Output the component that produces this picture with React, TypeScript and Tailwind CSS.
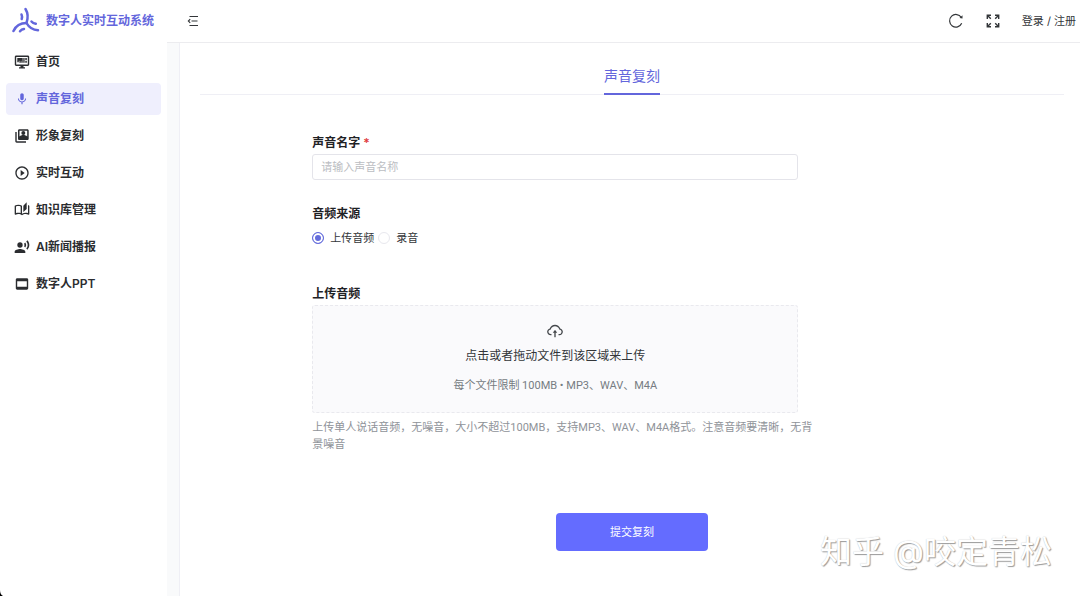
import { useState } from "react";
import type { ReactNode } from "react";
import { AiOutlineCloudUpload } from "react-icons/ai";
import {
  MdMic,
  MdOutlineAutoStories,
  MdPlayCircleOutline,
  MdRecordVoiceOver,
} from "react-icons/md";

function LogoIcon() {
  return (
    <svg
      viewBox="0 0 28 28"
      className="size-7 shrink-0"
      fill="none"
      stroke="currentColor"
      strokeWidth="2.5"
      strokeLinecap="round"
      aria-hidden="true"
    >
      <path d="M13.500 2C16 6 16.500 10 14.500 16" />
      <path d="M14.500 16C9 16 4 18.500 1.500 24" />
      <path d="M14.500 16C17 20.500 21 23 26 23.200" />
      <path d="M9.500 7.500C10.200 9 10.200 10.500 9.700 12" />
      <path d="M19.500 14.500C20.500 15.700 22 16.400 23.800 16.800" />
      <path d="M8 24.200C9 23 10.300 22.200 12 22" />
    </svg>
  );
}

function DashboardIcon() {
  return (
    <svg viewBox="0 0 16 16" className="size-4" fill="currentColor" aria-hidden="true">
      <path
        fillRule="evenodd"
        d="M2.200 1.500h11.600c.8 0 1.400.6 1.400 1.400v7.700c0 .8-.6 1.400-1.400 1.400H9.500v1.200H11v1.300H5v-1.300h1.500V12H2.200c-.8 0-1.400-.6-1.400-1.400V2.900c0-.8.6-1.400 1.400-1.400Zm0 1.400v7.700h11.600V2.900Z"
      />
      <path d="M3.300 4h5.400v4.700H7.300V6.700h-.5v2H5.400v-2H4.800v1.500H3.300ZM9.300 4h1.300v4.700H9.300ZM11.300 4h1.500v2h-1.500ZM11.300 6.800h1.500v1.900h-1.500Z" />
    </svg>
  );
}

function PortraitIcon() {
  return (
    <svg viewBox="0 0 16 16" className="size-4" fill="currentColor" aria-hidden="true">
      <path d="M2.700 4H1.300v9.300c0 .8.6 1.400 1.400 1.400H12v-1.400H2.700Z" />
      <path
        fillRule="evenodd"
        d="M5.300 1.300h8c.8 0 1.400.6 1.400 1.400v8c0 .7-.6 1.300-1.400 1.300h-8c-.7 0-1.300-.6-1.300-1.300v-8c0-.8.6-1.400 1.300-1.400Zm.2 1.400v5.800c1-1 2.200-1.500 3.800-1.500s2.900.5 3.900 1.500V2.700Z"
      />
      <circle cx="9.300" cy="5" r="2" />
    </svg>
  );
}

function SlideIcon() {
  return (
    <svg viewBox="0 0 16 16" className="size-4" fill="currentColor" aria-hidden="true">
      <path
        fillRule="evenodd"
        d="M3.200 2.300h9.600c.8 0 1.400.6 1.400 1.400v8.600c0 .8-.6 1.400-1.400 1.400H3.200c-.8 0-1.400-.6-1.400-1.400V3.700c0-.8.6-1.400 1.400-1.400Zm0 2.900v5.600h9.600V5.200Z"
      />
    </svg>
  );
}

function FoldIcon() {
  return (
    <svg viewBox="0 0 12 12" className="size-3" stroke="currentColor" strokeWidth="1.200" fill="none" aria-hidden="true">
      <path d="M2.500 1.500h8.500M4.500 6h6M2.500 10.500h8.500M3.200 4.200 1.400 6l1.800 1.800" />
    </svg>
  );
}

function ReloadIcon() {
  return (
    <svg viewBox="0 0 16 16" className="size-4" fill="none" stroke="currentColor" strokeWidth="1.200" aria-hidden="true">
      <path d="M13.700 10.300A6.300 6.300 0 1 1 13.300 4.500" />
      <path d="M14.500 2.300v3.200l-3-.5Z" fill="currentColor" stroke="none" />
    </svg>
  );
}

function FullscreenIcon() {
  return (
    <svg viewBox="0 0 14 14" className="size-3.5" fill="none" stroke="currentColor" strokeWidth="1.400" aria-hidden="true">
      <path d="M1.300 5V1.300H5M9 1.300h3.700V5M12.700 9v3.700H9M5 12.700H1.300V9" />
      <path d="M1.500 1.500l3.300 3.300M12.500 1.500 9.200 4.800M12.500 12.500 9.200 9.200M1.500 12.500l3.300-3.300" />
    </svg>
  );
}

const menuItems: { label: string; icon: ReactNode }[] = [
  { label: "首页", icon: <DashboardIcon /> },
  { label: "声音复刻", icon: <MdMic className="size-3.5" /> },
  { label: "形象复刻", icon: <PortraitIcon /> },
  { label: "实时互动", icon: <MdPlayCircleOutline className="size-4" /> },
  { label: "知识库管理", icon: <MdOutlineAutoStories className="size-4" /> },
  { label: "AI新闻播报", icon: <MdRecordVoiceOver className="size-4" /> },
  { label: "数字人PPT", icon: <SlideIcon /> },
];

const sources = [
  { value: "upload", label: "上传音频" },
  { value: "record", label: "录音" },
];

function Sidebar() {
  const [active, setActive] = useState("声音复刻");

  return (
    <aside className="w-[167px] shrink-0 bg-white">
      <div className="flex h-[42px] items-center gap-1.5 pl-3 text-[#6366dc]">
        <LogoIcon />
        <span className="text-xs font-semibold whitespace-nowrap">数字人实时互动系统</span>
      </div>
      <nav className="flex flex-col gap-[5px] px-1.5 pt-1">
        {menuItems.map((item) => (
          <a
            key={item.label}
            href="#"
            onClick={() => setActive(item.label)}
            className={`flex h-8 items-center gap-1.5 rounded px-2 text-xs font-semibold ${
              active === item.label ? "bg-[#efeffd] text-[#6366dc]" : "text-[#2b2d30]"
            }`}
          >
            <span className="flex w-4 justify-center">{item.icon}</span>
            {item.label}
          </a>
        ))}
      </nav>
    </aside>
  );
}

function Header() {
  return (
    <header className="flex h-[43px] items-center justify-between border-b border-[#ececef] bg-white pr-1 pl-5 text-[#333639]">
      <button type="button" aria-label="折叠菜单">
        <FoldIcon />
      </button>
      <div className="flex items-center gap-[22px]">
        <button type="button" aria-label="刷新">
          <ReloadIcon />
        </button>
        <button type="button" aria-label="全屏">
          <FullscreenIcon />
        </button>
        <a href="#" className="text-[11px]">
          登录 / 注册
        </a>
      </div>
    </header>
  );
}

function CloneForm() {
  const [source, setSource] = useState("upload");

  return (
    <form onSubmit={(e) => e.preventDefault()} className="pt-10">
      <div className="ml-[13%] w-9/16">
        <label htmlFor="voice-name" className="block text-xs leading-4 font-semibold text-[#1f2225]">
          声音名字 <span className="text-[#e03c3c]">*</span>
        </label>
        <input
          id="voice-name"
          type="text"
          placeholder="请输入声音名称"
          className="mt-[3px] block h-[26px] w-full rounded-[3px] border border-[#e4e4ea] px-2 text-[11px] outline-none placeholder:text-[#bbbdc2] focus:border-[#646cff]"
        />

        <fieldset className="mt-[26px]">
          <legend className="text-xs leading-4 font-semibold text-[#1f2225]">音频来源</legend>
          <div className="mt-2 flex gap-1">
            {sources.map((item) => (
              <label key={item.value} className="flex items-center gap-1.5 text-[11px] leading-4 text-[#333639]">
                <input
                  type="radio"
                  name="source"
                  value={item.value}
                  checked={source === item.value}
                  onChange={() => setSource(item.value)}
                  className="size-3 appearance-none rounded-full border border-[#e8e8ee] bg-white checked:border-[#646cdc] checked:bg-[#646cdc] checked:shadow-[inset_0_0_0_2px_#fff]"
                />
                {item.label}
              </label>
            ))}
          </div>
        </fieldset>

        <div className="mt-10 text-xs leading-4 font-semibold text-[#1f2225]">上传音频</div>
        <label
          htmlFor="audio-file"
          className="mt-[3px] flex h-27 cursor-pointer flex-col items-center rounded-[3px] border border-dashed border-[#e9e9ee] bg-[#fafafc] pt-4"
        >
          <AiOutlineCloudUpload className="size-[18px] text-[#45484c]" />
          <span className="mt-2 text-xs leading-4 text-[#333639]">点击或者拖动文件到该区域来上传</span>
          <span className="mt-3.5 font-[Roboto,'Noto_Sans_CJK_SC',sans-serif] text-[11px] leading-4 text-[#767c82]">
            每个文件限制 100MB • MP3、WAV、M4A
          </span>
          <input id="audio-file" type="file" accept=".mp3,.wav,.m4a" className="sr-only" />
        </label>
        <p className="-mr-4 mt-1.5 font-[Roboto,'Noto_Sans_CJK_SC',sans-serif] text-[11px] leading-[17px] text-[#8f9399]">
          上传单人说话音频，无噪音，大小不超过100MB，支持MP3、WAV、M4A格式。注意音频要清晰，无背景噪音
        </p>
      </div>

      <div className="mt-15 flex justify-center">
        <button
          type="submit"
          className="h-[38px] w-38 rounded bg-[#646cff] text-[11px] text-white hover:bg-[#747bff]"
        >
          提交复刻
        </button>
      </div>
    </form>
  );
}

export default function App() {
  return (
    <div className="relative flex min-h-screen overflow-hidden bg-white font-[Inter,'Noto_Sans_CJK_SC',sans-serif]">
      <Sidebar />
      <div className="flex min-w-0 flex-1 flex-col">
        <Header />
        <main className="flex-1 bg-[#f9fafb] pl-3">
          <section className="h-full border-l border-[#efeff5] bg-white pr-4 pl-5">
            <div role="tablist" className="flex justify-center border-b border-[#efeff5] pt-4">
              <button
                type="button"
                role="tab"
                aria-selected="true"
                className="-mb-px h-9 border-b-2 border-[#6366dc] text-sm text-[#6366dc]"
              >
                声音复刻
              </button>
            </div>
            <CloneForm />
          </section>
        </main>
      </div>

      <div className="pointer-events-none absolute right-7 bottom-5 text-[32px] leading-12 whitespace-nowrap text-white [text-shadow:1px_1px_1px_#9a9a9a,0_0_1px_#c4c4c4]">
        知乎 @咬定青松
      </div>
      <svg viewBox="0 0 3 6" className="absolute bottom-0 left-0 h-1.5 w-[3px]" aria-hidden="true">
        <path d="M0 0C0 3 1 5 3 6H0Z" fill="#000" />
      </svg>
    </div>
  );
}
